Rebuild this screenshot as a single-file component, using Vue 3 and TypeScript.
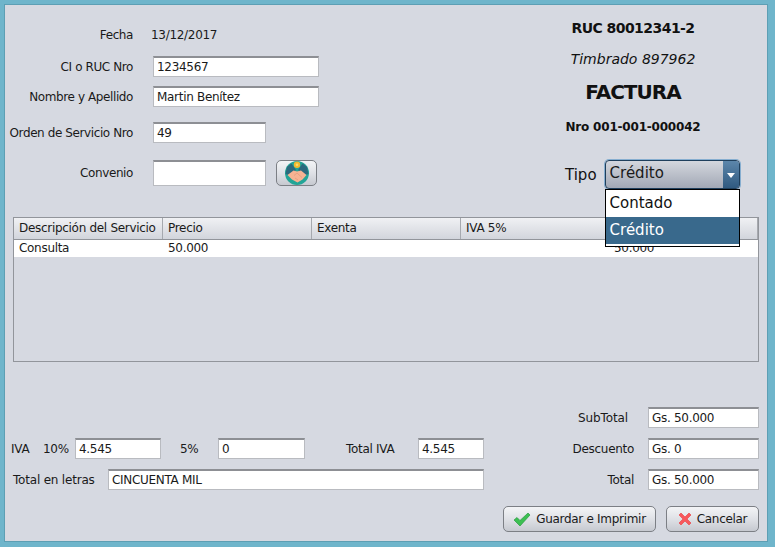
<template>
  <div class="window">
    <div class="panel">
      <section class="top">
        <div class="client-form">
          <div class="row row-date">
            <span class="label">Fecha</span>
            <span class="date">13/12/2017</span>
          </div>
          <div class="row row-ci">
            <span class="label">CI o RUC Nro</span>
            <div class="field w-wide">1234567</div>
          </div>
          <div class="row row-name">
            <span class="label">Nombre y Apellido</span>
            <div class="field w-wide">Martin Benítez</div>
          </div>
          <div class="row row-order">
            <span class="label">Orden de Servicio Nro</span>
            <div class="field w-mid">49</div>
          </div>
          <div class="row row-deal">
            <span class="label">Convenio</span>
            <div class="field w-mid tall"></div>
            <button class="btn icon-btn">
              <svg width="26" height="26" viewBox="0 0 26 26">
                <circle cx="13" cy="13" r="12" fill="#22a597" />
                <path d="M3 7 L7.5 3.5 L12 10 L5 15 L1.5 14 Z" fill="#2c6a7e" />
                <path d="M23 7 L18.5 3.5 L14 10 L21 15 L24.5 14 Z" fill="#2c6a7e" />
                <circle cx="13" cy="4.8" r="3.2" fill="#f5b82e" />
                <circle cx="13" cy="4.8" r="1.3" fill="#fadb6e" />
                <path d="M3.5 15 L9.5 10.5 L13 11.5 L17 10.5 L22.5 15 L18.5 19.5 L13.5 22.5 L8 19.5 Z" fill="#f6b393" />
                <path d="M10 15.5 L13 13 L18 17.5 M11 18 L14 20" fill="none" stroke="#e39c7b" stroke-width="0.8" />
              </svg>
            </button>
          </div>
        </div>
        <div class="invoice-head">
          <div class="ruc">RUC 80012341-2</div>
          <div class="stamp">Timbrado 897962</div>
          <div class="title">FACTURA</div>
          <div class="number">Nro 001-001-000042</div>
          <div class="type">
            <span>Tipo</span>
            <div class="combo">
              <div class="combo-value">Crédito</div>
              <div class="combo-arrow"></div>
              <ul class="combo-list">
                <li v-for="o in tipos" :key="o" :class="{ on: o === tipo }">{{ o }}</li>
              </ul>
            </div>
          </div>
        </div>
      </section>

      <div class="table">
        <div class="thead">
          <div v-for="c in columns" :key="c" class="th">{{ c }}</div>
        </div>
        <div class="tr">
          <div v-for="(v, i) in rowValues" :key="i" class="td">{{ v }}</div>
        </div>
      </div>

      <section class="bottom">
        <div class="totals-left">
          <div class="iva-row">
            <span class="t-iva">IVA</span>
            <span class="t-10">10%</span>
            <div class="field iva10">4.545</div>
            <span class="t-5">5%</span>
            <div class="field iva5">0</div>
            <span class="t-total">Total IVA</span>
            <div class="field ivat">4.545</div>
          </div>
          <div class="words-row">
            <span class="t-words">Total en letras</span>
            <div class="field words">CINCUENTA MIL</div>
          </div>
        </div>
        <div class="totals-right">
          <div v-for="t in totals" :key="t.label" class="total-row">
            <span>{{ t.label }}</span>
            <div class="field w-total">{{ t.value }}</div>
          </div>
        </div>
      </section>

      <footer class="actions">
        <button class="btn action save">
          <svg width="18" height="15" viewBox="0 0 18 15">
            <path d="M1 8 L4 5.5 L7 8.5 L15 1 L17 3 L7 14 Z" fill="#3cc052" stroke="#2a9a40" stroke-width="0.7" />
          </svg>
          Guardar e Imprimir
        </button>
        <button class="btn action cancel">
          <svg width="14" height="14" viewBox="0 0 14 14">
            <path d="M1 3 L3 1 L7 5 L11 1 L13 3 L9 7 L13 11 L11 13 L7 9 L3 13 L1 11 L5 7 Z" fill="#f8585c" stroke="#e9494e" stroke-width="0.7" />
          </svg>
          Cancelar
        </button>
      </footer>
    </div>
  </div>
</template>

<script setup lang="ts">
const tipo = 'Crédito';
const tipos = ['Contado', 'Crédito'];
const columns = ['Descripción del Servicio', 'Precio', 'Exenta', 'IVA 5%', ''];
const rowValues = ['Consulta', '50.000', '', '', '50.000'];
const totals = [
  { label: 'SubTotal', value: 'Gs. 50.000' },
  { label: 'Descuento', value: 'Gs. 0' },
  { label: 'Total', value: 'Gs. 50.000' }
];
</script>

<style>
html, body { margin: 0; background: #6fb5cb; }
</style>

<style scoped>
.window {
  width: 775px;
  height: 547px;
  box-sizing: border-box;
  padding: 4px 7px 5px 4px;
  background: #6fb5cb;
  font-family: "DejaVu Sans", sans-serif;
  font-size: 12px;
  letter-spacing: -0.3px;
  color: #1a1a1a;
}
.panel {
  height: 100%;
  box-sizing: border-box;
  border: 1px solid #5d9fb4;
  background: #d6d9e1;
  display: flex;
  flex-direction: column;
  padding: 0 8px 0 8px;
}
.top {
  display: flex;
  justify-content: space-between;
  height: 211px;
  flex: none;
}
.row {
  display: flex;
  align-items: center;
}
.label {
  width: 124px;
  margin-left: -4px;
  margin-right: 20px;
  text-align: right;
  white-space: nowrap;
  letter-spacing: -0.4px;
  flex: none;
}
.row-date { margin-top: 20px; height: 20px; }
.date { margin-left: -2px; }
.row-ci { margin-top: 11px; }
.row-name { margin-top: 9px; }
.row-order { margin-top: 15px; }
.row-deal { margin-top: 17px; }
.field {
  box-sizing: border-box;
  height: 21px;
  line-height: 18px;
  padding: 0 3px;
  background: #fff;
  border: 1px solid #b9bbc0;
  border-top: 2px solid #8d8f94;
  white-space: nowrap;
  overflow: hidden;
  flex: none;
}
.w-wide { width: 166px; }
.w-mid { width: 113px; }
.tall { height: 26px; }
.btn {
  font: inherit;
  letter-spacing: inherit;
  color: inherit;
  box-sizing: border-box;
  border: 1px solid #7c7f85;
  border-radius: 5px;
  background: linear-gradient(#f3f4f6, #dfe1e6 50%, #c6c9d0);
  display: flex;
  align-items: center;
  justify-content: center;
  padding: 0;
}
.icon-btn {
  width: 41px;
  height: 26px;
  margin-left: 10px;
}
.invoice-head {
  width: 252px;
  text-align: center;
  color: #111;
}
.ruc { margin-top: 15px; font-weight: 700; font-size: 14px; letter-spacing: -0.55px; }
.stamp { margin-top: 15px; font-style: italic; font-size: 14px; letter-spacing: 0; }
.title { margin-top: 13px; font-weight: 700; font-size: 20px; letter-spacing: -1px; }
.number { margin-top: 16px; font-weight: 700; font-size: 12px; letter-spacing: -0.2px; }
.type {
  display: flex;
  align-items: center;
  gap: 8px;
  margin-top: 26px;
  padding-left: 58px;
  font-size: 15px;
  letter-spacing: 0;
}
.combo {
  position: relative;
  width: 135px;
  height: 29px;
  box-sizing: border-box;
  border: 1px solid #1f3f5c;
  border-radius: 4px;
  box-shadow: 0 0 0 1px #86aed0;
  background: linear-gradient(#d4d7de, #a2a8b5);
  display: flex;
}
.combo-value {
  flex: 1;
  text-align: left;
  padding-left: 4px;
  line-height: 25px;
  color: #1a1a1a;
}
.combo-arrow {
  width: 16px;
  border-radius: 0 3px 3px 0;
  background: linear-gradient(#5c86ab, #305a80);
  position: relative;
}
.combo-arrow::after {
  content: "";
  position: absolute;
  left: 4px;
  top: 12px;
  border: 4px solid transparent;
  border-top: 5px solid #fff;
  border-bottom: 0;
}
.combo-list {
  position: absolute;
  left: -1px;
  top: 28px;
  z-index: 3;
  width: 135px;
  margin: 0;
  padding: 0 0 2px;
  box-sizing: border-box;
  border: 1px solid #000;
  background: #fff;
  list-style: none;
  text-align: left;
}
.combo-list li {
  height: 27px;
  line-height: 26px;
  padding-left: 4px;
}
.combo-list li.on {
  background: #39698c;
  color: #fff;
}
.table {
  flex: none;
  width: 746px;
  height: 145px;
  box-sizing: border-box;
  margin-top: 1px;
  border: 1px solid #92959b;
}
.thead {
  display: grid;
  grid-template-columns: 149px 149px 149px 148px 1fr;
  height: 22px;
  border-bottom: 1px solid #92959b;
  background: linear-gradient(#f0f1f4, #d2d5dc);
  box-sizing: border-box;
}
.th {
  padding-left: 5px;
  line-height: 21px;
  border-right: 1px solid #a6a9af;
}
.tr {
  display: grid;
  grid-template-columns: 149px 149px 149px 148px 1fr;
  height: 17px;
  background: #fff;
}
.td {
  padding-left: 5px;
  line-height: 16px;
}
.bottom {
  flex: none;
  display: flex;
  margin-top: 45px;
  justify-content: space-between;
  height: 83px;
}
.totals-left {
  display: flex;
  flex-direction: column;
  justify-content: flex-end;
  margin-left: -2px;
}
.iva-row, .words-row {
  display: flex;
  align-items: center;
}
.words-row { margin-top: 10px; }
.t-iva { width: 19px; }
.t-10 { margin-left: 13px; width: 32px; }
.iva10 { width: 86px; }
.t-5 { margin-left: 19px; width: 38px; }
.iva5 { width: 87px; }
.t-total { margin-left: 41px; width: 72px; }
.ivat { width: 66px; }
.t-words { margin-left: 2px; width: 95px; letter-spacing: -0.2px; }
.words { width: 376px; }
.totals-right {
  display: flex;
  flex-direction: column;
  gap: 10px;
}
.total-row {
  display: flex;
  align-items: center;
  justify-content: flex-end;
  gap: 14px;
}
.total-row:first-child span { margin-right: 6px; letter-spacing: -0.1px; }
.w-total { width: 111px; }
.actions {
  display: flex;
  justify-content: flex-end;
  gap: 10px;
  margin-top: 16px;
}
.action {
  height: 26px;
  gap: 5px;
}
.save { width: 153px; }
.cancel { width: 93px; }
</style>
